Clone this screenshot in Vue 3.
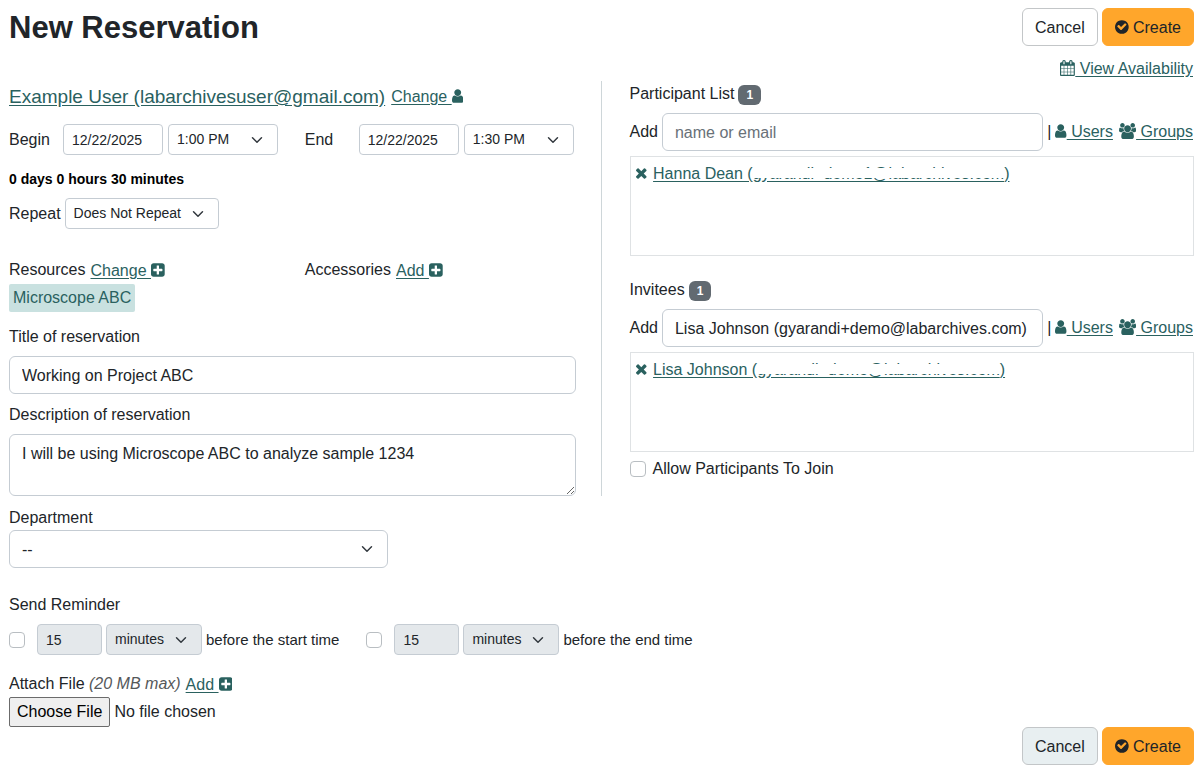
<script setup>
import { ref, h } from 'vue'

const shapes = {
  user: [1280, 'M1280 137q0 -109 -62.5 -187t-150.5 -78h-854q-88 0 -150.5 78t-62.5 187q0 85 8.5 160.5t31.5 152t58.5 131t94 89t134.5 34.5q131 -128 313 -128t313 128q76 0 134.5 -34.5t94 -89t58.5 -131t31.5 -152t8.5 -160.5zM1024 1024q0 -159 -112.5 -271.5t-271.5 -112.5t-271.5 112.5t-112.5 271.5t112.5 271.5t271.5 112.5t271.5 -112.5t112.5 -271.5z'],
  users: [1920, 'M593 640q-162 -5 -265 -128h-134q-82 0 -138 40.5t-56 118.5q0 353 124 353q6 0 43.5 -21t97.5 -42.5t119 -21.5q67 0 133 23q-5 -37 -5 -66q0 -139 81 -256zM1664 3q0 -120 -73 -189.5t-194 -69.5h-874q-121 0 -194 69.5t-73 189.5q0 53 3.5 103.5t14 109t26.5 108.5t43 97.5t62 81t85.5 53.5t111.5 20q10 0 43 -21.5t73 -48t107 -48t135 -21.5t135 21.5t107 48t73 48t43 21.5q61 0 111.5 -20t85.5 -53.5t62 -81t43 -97.5t26.5 -108.5t14 -109t3.5 -103.5zM640 1280q0 -106 -75 -181t-181 -75t-181 75t-75 181t75 181t181 75t181 -75t75 -181zM1344 896q0 -159 -112.5 -271.5t-271.5 -112.5t-271.5 112.5t-112.5 271.5t112.5 271.5t271.5 112.5t271.5 -112.5t112.5 -271.5zM1920 671q0 -78 -56 -118.5t-138 -40.5h-134q-103 123 -265 128q81 117 81 256q0 29 -5 66q66 -23 133 -23q59 0 119 21.5t97.5 42.5t43.5 21q124 0 124 -353zM1792 1280q0 -106 -75 -181t-181 -75t-181 75t-75 181t75 181t181 75t181 -75t75 -181z'],
  check: [1536, 'M1284 898q0 27 -18 45l-91 90q-19 19 -45 19t-45 -19l-408 -407l-226 226q-19 19 -45 19t-45 -19l-91 -90q-18 -18 -18 -45q0 -26 18 -45l362 -362q19 -19 45 -19q27 0 46 19l543 543q18 18 18 45zM1536 640q0 -209 -103 -385.5t-279.5 -279.5t-385.5 -103t-385.5 103t-279.5 279.5t-103 385.5t103 385.5t279.5 279.5t385.5 103t385.5 -103t279.5 -279.5t103 -385.5z'],
  plus: [1536, 'M1280 576v128q0 26 -19 45t-45 19h-320v320q0 26 -19 45t-45 19h-128q-26 0 -45 -19t-19 -45v-320h-320q-26 0 -45 -19t-19 -45v-128q0 -26 19 -45t45 -19h320v-320q0 -26 19 -45t45 -19h128q26 0 45 19t19 45v320h320q26 0 45 19t19 45zM1536 1120v-960q0 -119 -84.5 -203.5t-203.5 -84.5h-960q-119 0 -203.5 84.5t-84.5 203.5v960q0 119 84.5 203.5t203.5 84.5h960q119 0 203.5 -84.5t84.5 -203.5z'],
  times: [1408, 'M1298 214q0 -40 -28 -68l-136 -136q-28 -28 -68 -28t-68 28l-294 294l-294 -294q-28 -28 -68 -28t-68 28l-136 136q-28 28 -28 68t28 68l294 294l-294 294q-28 28 -28 68t28 68l136 136q28 28 68 28t68 -28l294 -294l294 294q28 28 68 28t68 -28l136 -136q28 -28 28 -68t-28 -68l-294 -294l294 -294q28 -28 28 -68z'],
  calendar: [1664, 'M128 -128h288v288h-288v-288zM480 -128h320v288h-320v-288zM128 224h288v320h-288v-320zM480 224h320v320h-320v-320zM128 608h288v288h-288v-288zM864 -128h320v288h-320v-288zM480 608h320v288h-320v-288zM1248 -128h288v288h-288v-288zM864 224h320v320h-320v-320zM512 1088v288q0 13 -9.5 22.5t-22.5 9.5h-64q-13 0 -22.5 -9.5t-9.5 -22.5v-288q0 -13 9.5 -22.5t22.5 -9.5h64q13 0 22.5 9.5t9.5 22.5zM1248 224h288v320h-288v-320zM864 608h320v288h-320v-288zM1248 608h288v288h-288v-288zM1280 1088v288q0 13 -9.5 22.5t-22.5 9.5h-64q-13 0 -22.5 -9.5t-9.5 -22.5v-288q0 -13 9.5 -22.5t22.5 -9.5h64q13 0 22.5 9.5t9.5 22.5zM1664 1152v-1280q0 -52 -38 -90t-90 -38h-1408q-52 0 -90 38t-38 90v1280q0 52 38 90t90 38h128v96q0 66 47 113t113 47h64q66 0 113 -47t47 -113v-96h384v96q0 66 47 113t113 47h64q66 0 113 -47t47 -113v-96h128q52 0 90 -38t38 -90z'],
}

const Icon = (props) => {
  const [w, d] = shapes[props.name]
  return h('svg', { class: 'icon', viewBox: `0 0 ${w} 1792`, 'aria-hidden': 'true' }, [
    h('path', { d, transform: 'matrix(1 0 0 -1 0 1536)', fill: 'currentColor', 'fill-rule': 'evenodd' }),
  ])
}
Icon.props = ['name']

const spans = ref([
  { key: 'begin', label: 'Begin', date: '12/22/2025', time: '1:00 PM' },
  { key: 'end', label: 'End', date: '12/22/2025', time: '1:30 PM' },
])
const times = ['1:00 PM', '1:30 PM', '2:00 PM']

const people = ref([
  { key: 'participants', title: 'Participant List', query: '', name: 'Hanna Dean', mail: 'gyarandi+demo1@labarchives.com' },
  { key: 'invitees', title: 'Invitees', query: 'Lisa Johnson (gyarandi+demo@labarchives.com)', name: 'Lisa Johnson', mail: 'gyarandi+demo@labarchives.com' },
])

const reminders = [
  { key: 'start', text: 'before the start time' },
  { key: 'stop', text: 'before the end time' },
]
const title = ref('Working on Project ABC')
const description = ref('I will be using Microscope ABC to analyze sample 1234')
</script>

<template>
  <form class="page" @submit.prevent>
    <header class="header">
      <h1>New Reservation</h1>
      <div class="header-side">
        <div class="buttons">
          <button type="button" class="btn">Cancel</button>
          <button type="submit" class="btn primary"><Icon name="check" /> Create</button>
        </div>
        <a href="#" class="availability"><Icon name="calendar" /> View Availability</a>
      </div>
    </header>

    <main class="columns">
      <section class="details">
        <div class="owner">
          <a href="#" class="owner-name">Example User (labarchivesuser@gmail.com)</a>
          <a href="#">Change <Icon name="user" /></a>
        </div>

        <div class="pair when">
          <div v-for="s in spans" :key="s.key" class="moment">
            <label :for="s.key + '-date'">{{ s.label }}</label>
            <input :id="s.key + '-date'" v-model="s.date" type="text" class="control small date" />
            <select v-model="s.time" class="control small time" :aria-label="s.label + ' time'">
              <option v-for="t in times" :key="t">{{ t }}</option>
            </select>
          </div>
        </div>

        <strong class="duration">0 days 0 hours 30 minutes</strong>

        <div class="inline">
          <label for="repeat">Repeat</label>
          <select id="repeat" class="control small">
            <option>Does Not Repeat</option>
          </select>
        </div>

        <div class="pair assets">
          <div>
            <div class="caption">Resources <a href="#">Change <Icon name="plus" /></a></div>
            <a href="#" class="chip">Microscope ABC</a>
          </div>
          <div>
            <div class="caption">Accessories <a href="#">Add <Icon name="plus" /></a></div>
          </div>
        </div>

        <label for="title" class="field-label">Title of reservation</label>
        <input id="title" v-model="title" type="text" class="control" />
        <label for="description" class="field-label second">Description of reservation</label>
        <textarea id="description" v-model="description" class="control" rows="2"></textarea>
      </section>

      <section class="attendees">
        <div v-for="p in people" :key="p.key" class="group">
          <h2>{{ p.title }} <span class="badge">1</span></h2>
          <div class="adder">
            <label :for="p.key">Add</label>
            <input :id="p.key" v-model="p.query" type="text" class="control" placeholder="name or email" />
            <span>|</span>
            <a href="#"><Icon name="user" /> Users</a>
            <a href="#" class="groups"><Icon name="users" /> Groups</a>
          </div>
          <ul class="roster">
            <li>
              <button type="button" class="remove" :aria-label="'Remove ' + p.name"><Icon name="times" /></button>
              <a href="#">{{ p.name }} (<span class="masked">{{ p.mail }}</span>)</a>
            </li>
          </ul>
        </div>
        <div class="join">
          <input id="join" type="checkbox" class="tick" />
          <label for="join">Allow Participants To Join</label>
        </div>
      </section>
    </main>

    <section class="extras">
      <label for="department">Department</label>
      <select id="department" class="control department">
        <option>--</option>
      </select>

      <div class="reminder-title">Send Reminder</div>
      <div class="reminders">
        <div v-for="r in reminders" :key="r.key" class="reminder">
          <input :id="'remind-' + r.key" type="checkbox" class="tick" />
          <input type="text" value="15" disabled class="control small amount" :aria-label="'Amount ' + r.text" />
          <select disabled class="control small" :aria-label="'Unit ' + r.text">
            <option>minutes</option>
          </select>
          <label :for="'remind-' + r.key">{{ r.text }}</label>
        </div>
      </div>

      <div class="caption attach">
        <label for="file">Attach File <em>(20 MB max)</em></label>
        <a href="#">Add <Icon name="plus" /></a>
      </div>
      <input id="file" type="file" class="file" />
    </section>

    <footer class="buttons footer">
      <button type="button" class="btn tinted">Cancel</button>
      <button type="submit" class="btn primary"><Icon name="check" /> Create</button>
    </footer>
  </form>
</template>

<style>
body {
  margin: 0;
  background: #fff;
}
.icon {
  height: 16px;
  vertical-align: -2px;
}
</style>

<style scoped>
.page,
.page * {
  box-sizing: border-box;
}
.page {
  padding: 8px 9px;
  font: 16px/24px "Liberation Sans", Arial, sans-serif;
  color: #212529;
}
a {
  color: #2a615f;
  text-underline-offset: 2px;
}
h1 {
  margin: 0;
  font-size: 31px;
  line-height: 40px;
  font-weight: 700;
}
.header {
  display: flex;
  justify-content: space-between;
  align-items: flex-start;
}
.header-side {
  display: flex;
  flex-direction: column;
  align-items: flex-end;
  gap: 11px;
}
.availability {
  padding-right: 1px;
}
.buttons {
  display: flex;
  justify-content: flex-end;
  gap: 4px;
}
.btn {
  padding: 7px 12px 5px;
  border: 1px solid #c3c6c8;
  border-radius: 6px;
  background: #fff;
  color: #212529;
  font: inherit;
}
.btn.primary {
  background: #ffa62b;
  border-color: #ffa62b;
}
.btn.tinted {
  background: #e8eff1;
}
.columns {
  display: grid;
  grid-template-columns: calc(50% - 1px) 1fr;
}
.details {
  display: flex;
  flex-direction: column;
  align-items: stretch;
}
.owner {
  display: flex;
  align-items: center;
  gap: 6px;
  padding-top: 1px;
  line-height: 30px;
}
.owner-name {
  font-size: 19px;
}
.pair {
  display: grid;
  grid-template-columns: 1fr 1fr;
}
.when {
  margin-top: 12px;
}
.moment {
  display: flex;
  align-items: center;
}
.moment label {
  width: 54px;
}
.control {
  display: block;
  width: 100%;
  margin: 0;
  padding: 7px 12px 5px;
  border: 1px solid #c5ccd3;
  border-radius: 6px;
  background-color: #fff;
  color: #212529;
  font: inherit;
}
.control::placeholder {
  color: #697178;
}
select.control {
  appearance: none;
  padding-right: 36px;
  background-image: url("data:image/svg+xml,%3Csvg xmlns='http://www.w3.org/2000/svg' viewBox='0 0 16 16'%3E%3Cpath fill='none' stroke='%23343a40' stroke-linecap='round' stroke-linejoin='round' stroke-width='2' d='m2 5 6 6 6-6'/%3E%3C/svg%3E");
  background-repeat: no-repeat;
  background-position: right 12px center;
  background-size: 16px 12px;
}
.control.small {
  width: auto;
  height: 31px;
  padding: 4px 8px;
  border-radius: 4px;
  font-size: 14px;
  line-height: 21px;
}
select.control.small {
  padding-right: 36px;
}
.control:disabled {
  background-color: #e4e8eb;
  opacity: 1;
}
.control.date {
  width: 100px;
  margin-right: 5px;
}
.control.time {
  width: 110px;
}
.duration {
  margin: 14px 0 8px;
  font-size: 14px;
  line-height: 21px;
  color: #000;
}
.inline {
  display: flex;
  align-items: center;
  gap: 4px;
}
.assets {
  margin-top: 28px;
}
.caption {
  display: flex;
  align-items: center;
  gap: 5px;
}
.caption a {
  padding-top: 2px;
}
.chip {
  display: inline-block;
  margin-top: 1px;
  padding: 2px 4px;
  border-radius: 2px;
  background: #c9e1e0;
  text-decoration: none;
}
.field-label {
  margin: 13px 0 7px;
}
.field-label.second {
  margin-top: 9px;
}
.details > .control {
  width: auto;
  margin-right: 25px;
}
textarea.control {
  height: 62px;
  resize: vertical;
}
.attendees {
  padding: 1px 0 0 28px;
  border-left: 1px solid #ced6d9;
}
.group {
  margin-bottom: 22px;
}
h2 {
  display: flex;
  align-items: center;
  gap: 4px;
  margin: 0 0 7px;
  font-size: 16px;
  font-weight: 400;
  line-height: 24px;
}
.badge {
  height: 20px;
  margin-top: 2px;
  padding: 0 8px;
  border-radius: 6px;
  background: #626a71;
  color: #fff;
  font-size: 12px;
  font-weight: 700;
  line-height: 20px;
}
.adder {
  display: flex;
  align-items: center;
  gap: 4px;
  padding-right: 1px;
  white-space: nowrap;
}
.adder .control {
  flex: 1;
  min-width: 0;
}
.groups {
  margin-left: 2px;
}
.roster {
  min-height: 100px;
  margin: 5px 0 0;
  padding: 5px 4px;
  border: 1px solid #dfe2e4;
  list-style: none;
}
.roster li {
  display: flex;
  gap: 6px;
}
.remove {
  padding: 0;
  border: 0;
  background: none;
  color: #2a615f;
  font: inherit;
}
.masked {
  position: relative;
}
.masked::after {
  content: "";
  position: absolute;
  inset: 3px 0 4px;
  background: #fff;
}
.join {
  display: flex;
  align-items: center;
  gap: 7px;
  margin-top: -17px;
}
.tick {
  appearance: none;
  width: 16px;
  height: 16px;
  margin: 0;
  border: 1px solid #b9bec2;
  border-radius: 4px;
  background: #fff;
}
.extras {
  display: flex;
  flex-direction: column;
  align-items: flex-start;
  margin-top: 10px;
}
.department {
  width: 32%;
}
.reminder-title {
  margin: 25px 0 7px;
}
.reminders {
  display: flex;
  gap: 27px;
}
.reminder {
  display: flex;
  align-items: center;
  gap: 4px;
}
.reminder label {
  font-size: 15px;
}
.reminder .tick {
  margin-right: 8px;
}
.control.amount {
  width: 65px;
}
.attach {
  margin-top: 16px;
}
em {
  color: #55585a;
}
.file {
  color: inherit;
  font: inherit;
}
.file::file-selector-button {
  height: 30px;
  margin: 0 4px 0 0;
  padding: 0 7px;
  border: 1px solid #6b6b6b;
  border-radius: 2px;
  background: #efefef;
  color: #000;
  font: inherit;
}
</style>
